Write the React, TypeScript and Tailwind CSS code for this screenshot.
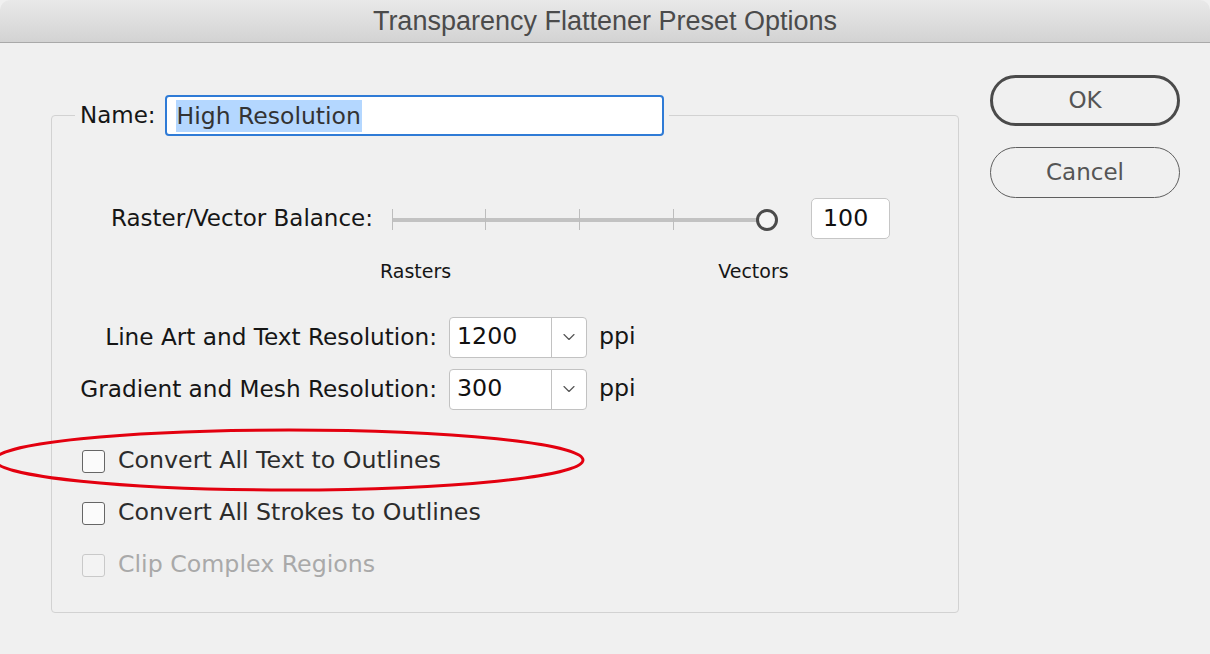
import { ChevronDown } from 'lucide-react';

const body = { fontFamily: '"DejaVu Sans", sans-serif' };

function Checkbox({ label, disabled = false }: { label: string; disabled?: boolean }) {
  return (
    <label className="flex h-[52px] items-center">
      <span
        className={`h-[23px] w-[23px] rounded-[3px] border-[1.5px] ${
          disabled ? 'border-[#c9c9c9] bg-[#f3f3f3]' : 'border-[#666] bg-[#fbfbfb]'
        }`}
      />
      <span className={`ml-[13px] text-[23.7px] ${disabled ? 'text-[#a9a9a9]' : 'text-[#2c2c2c]'}`}>
        {label}
      </span>
    </label>
  );
}

function ResolutionRow({ label, value }: { label: string; value: string }) {
  return (
    <div className="flex h-[52px] items-center">
      <div className="flex w-[367px] shrink-0 justify-end pr-[12px]">
        <span className="whitespace-nowrap text-[23.2px] text-[#161616]">{label}</span>
      </div>
      <div className="flex h-[41px] w-[138px] items-stretch rounded-[4px] border border-[#c2c2c2] bg-white">
        <span className="flex flex-1 items-center pl-[7px] text-[23.7px] text-[#111]">{value}</span>
        <span className="flex w-[35px] items-center justify-center border-l border-[#c2c2c2]">
          <ChevronDown size={20} strokeWidth={1.4} color="#555" />
        </span>
      </div>
      <span className="ml-[12px] text-[23.7px] text-[#161616]">ppi</span>
    </div>
  );
}

export default function App() {
  return (
    <div className="relative h-[654px] w-[1210px] overflow-hidden bg-[#f0f0f0]" style={body}>
      <div className="flex h-[43px] items-center justify-center rounded-t-[10px] border-b border-[#a9a9a9] bg-gradient-to-b from-[#e9e9e9] to-[#d3d3d3]">
        <span className="text-[27px] text-[#4b4b4b]" style={{ fontFamily: '"Liberation Sans", sans-serif' }}>
          Transparency Flattener Preset Options
        </span>
      </div>

      <div className="flex">
        <fieldset className="ml-[51px] mt-[52px] h-[518px] w-[908px] rounded-[4px] border border-[#d2d2d2]">
          <legend className="ml-[23px] flex items-center px-[5px]">
            <span className="text-[23px] text-[#161616]">Name:</span>
            <div className="ml-[9px] flex h-[41px] w-[499px] items-center rounded-[4px] border-2 border-[#2f7bd6] bg-white pl-[9px]">
              <span className="bg-[#b4d7ff] px-[1px] text-[23.5px] leading-[32px] text-[#333]">High Resolution</span>
            </div>
          </legend>

          <div className="pl-[30px]">
            <div className="mt-[62px] flex h-[41px] items-center">
              <div className="flex w-[291px] shrink-0 justify-end">
                <span className="whitespace-nowrap text-[23px] text-[#161616]">Raster/Vector Balance:</span>
              </div>
              <div className="relative ml-[19px] h-[41px] w-[386px]">
                <div className="absolute left-0 right-[10px] top-[20px] h-[4px] bg-[#c2c2c2]" />
                {[0, 93, 187, 281].map((x) => (
                  <div key={x} className="absolute top-[11px] h-[21px] w-px bg-[#bdbdbd]" style={{ left: x }} />
                ))}
                <div className="absolute right-0 top-[11px] h-[22px] w-[22px] rounded-full border-[3.5px] border-[#4b4b4b] bg-[#f4f4f4]" />
              </div>
              <div className="ml-[33px] flex h-[41px] w-[79px] items-center rounded-[5px] border border-[#c6c6c6] bg-white pl-[11px] text-[23.7px] text-[#111]">
                100
              </div>
            </div>

            <div className="mt-[19px] flex h-[26px] items-center text-[19px] text-[#161616]">
              <span className="ml-[298px]">Rasters</span>
              <span className="ml-[267px]">Vectors</span>
            </div>

            <div className="mt-[27px]">
              <ResolutionRow label="Line Art and Text Resolution:" value="1200" />
              <ResolutionRow label="Gradient and Mesh Resolution:" value="300" />
            </div>

            <div className="mt-[20px]">
              <Checkbox label="Convert All Text to Outlines" />
              <Checkbox label="Convert All Strokes to Outlines" />
              <Checkbox label="Clip Complex Regions" disabled />
            </div>
          </div>
        </fieldset>

        <div className="ml-[31px] mt-[32px] flex w-[190px] flex-col gap-[21px]">
          <button className="h-[51px] rounded-full border-[3px] border-[#4a4a4a] text-[23px] text-[#555]">OK</button>
          <button className="h-[51px] rounded-full border-[1.5px] border-[#5e5e5e] text-[23px] text-[#555]">Cancel</button>
        </div>
      </div>

      <svg className="pointer-events-none absolute left-0 top-0" width="1210" height="654">
        <ellipse cx="289" cy="460" rx="294" ry="30" fill="none" stroke="#e3000f" strokeWidth="3" />
      </svg>
    </div>
  );
}
